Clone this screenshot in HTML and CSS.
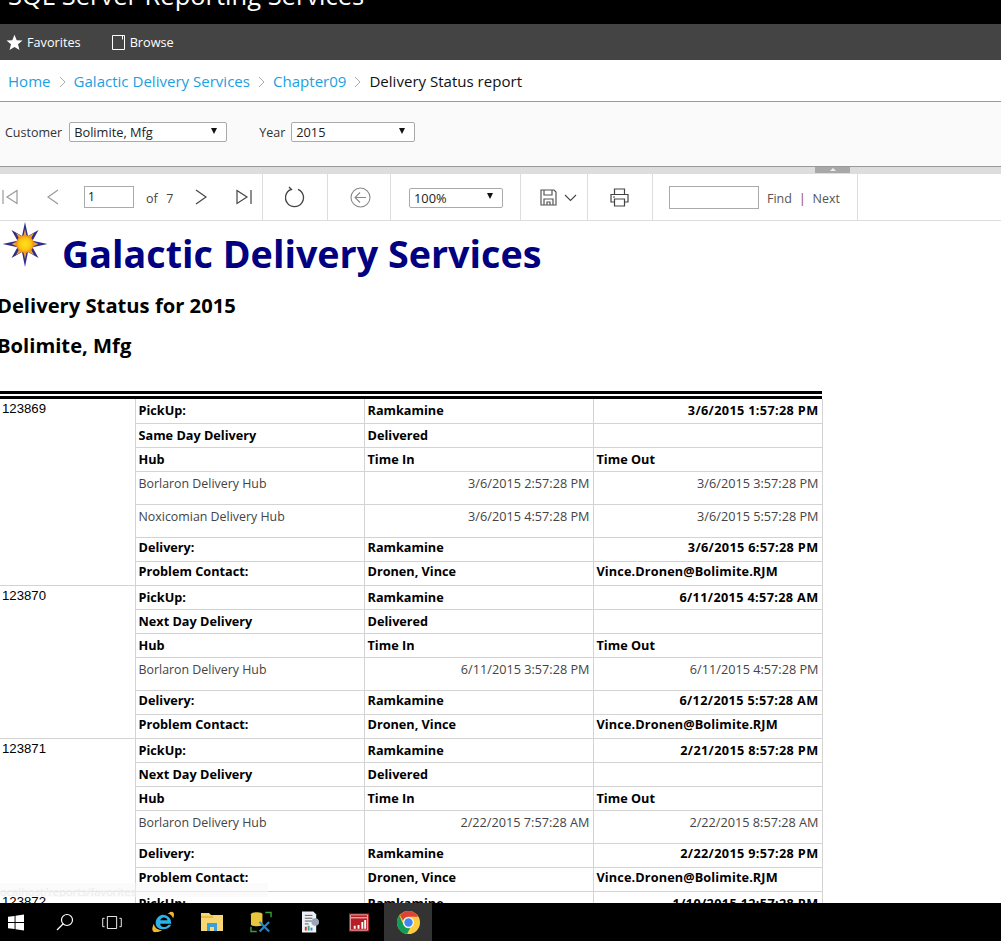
FILE: index.html
```html
<!DOCTYPE html>
<html lang="en">
<head>
<meta charset="utf-8">
<title>Delivery Status report</title>
<link rel="stylesheet" href="styles.css">
</head>
<body>
<div class="page">
  <header class="topbar"><div class="brand">SQL Server Reporting Services</div></header>
  <nav class="navbar">
    <a class="navitem">
      <svg class="navicon" width="17" height="17" viewBox="0 0 17 17"><path fill="#fff" d="M8.500 .8l2.200 5.400 5.800.4-4.500 3.700 1.500 5.700-5-3.100-5 3.100 1.500-5.700L.5 6.600l5.800-.4z"/></svg>
      Favorites</a>
    <a class="navitem browse">
      <svg class="navicon" width="13" height="15" viewBox="0 0 13 15"><path fill="none" stroke="#fff" d="M.5.500h12v14H.5zM10.500 .5v4"/></svg>
      Browse</a>
  </nav>
  <div class="crumbs">
    <a>Home</a><svg class="sep" width="7" height="12" viewBox="0 0 7 12"><path fill="none" stroke="#aaa" d="M1 1l5 5-5 5"/></svg><a>Galactic Delivery Services</a><svg class="sep" width="7" height="12" viewBox="0 0 7 12"><path fill="none" stroke="#aaa" d="M1 1l5 5-5 5"/></svg><a>Chapter09</a><svg class="sep" width="7" height="12" viewBox="0 0 7 12"><path fill="none" stroke="#aaa" d="M1 1l5 5-5 5"/></svg><span class="current">Delivery Status report</span>
  </div>
  <div class="params">
    <span class="plabel">Customer</span>
    <div class="select customer"><span>Bolimite, Mfg</span><i class="caret"></i></div>
    <span class="plabel year">Year</span>
    <div class="select yearsel"><span>2015</span><i class="caret"></i></div>
  </div>
  <div class="splitter"><div class="grip"><i></i></div></div>
  <div class="toolbar">
    <div class="tgroup pager">
      <svg class="first" width="16" height="16" viewBox="0 0 16 16"><path fill="none" stroke="#999" stroke-width="1.200" d="M1 1v14M15 1.500L5 8l10 6.500z"/></svg>
      <svg class="prev" width="12" height="16" viewBox="0 0 12 16"><path fill="none" stroke="#999" stroke-width="1.200" d="M11 1L1 8l10 7"/></svg>
      <div class="pageinput">1</div>
      <span class="of">of&nbsp; 7</span>
      <svg class="next" width="12" height="16" viewBox="0 0 12 16"><path fill="none" stroke="#444" stroke-width="1.200" d="M1 1l10 7-10 7"/></svg>
      <svg class="last" width="16" height="16" viewBox="0 0 16 16"><path fill="none" stroke="#444" stroke-width="1.200" d="M15 1v14M1 1.500L11 8 1 14.500z"/></svg>
    </div>
    <div class="tgroup refresh">
      <svg width="20" height="22" viewBox="0 0 20 22"><path fill="none" stroke="#444" stroke-width="1.300" d="M6 3.400a9 9 0 1 0 7 0M4 1l2.500 2.600L3 5"/></svg>
    </div>
    <div class="tgroup back">
      <svg width="21" height="21" viewBox="0 0 21 21"><circle cx="10.500" cy="10.500" r="9.500" fill="none" stroke="#888" stroke-width="1.100"/><path fill="none" stroke="#888" stroke-width="1.100" d="M16 10.500H5M10 5.500l-5 5 5 5"/></svg>
    </div>
    <div class="tgroup zoom">
      <div class="select zoomsel"><span>100%</span><i class="caret"></i></div>
    </div>
    <div class="tgroup save">
      <svg width="17" height="17" viewBox="0 0 17 17"><path fill="none" stroke="#555" stroke-width="1.200" d="M1 1h13l2 2v13H1zM4 1v5h8V1M4 16v-6h9v6M7 16v-3h3v3"/></svg>
      <svg class="chev" width="13" height="8" viewBox="0 0 13 8"><path fill="none" stroke="#444" stroke-width="1.100" d="M1 1l5.500 5.500L12 1"/></svg>
    </div>
    <div class="tgroup print">
      <svg width="19" height="19" viewBox="0 0 19 19"><path fill="none" stroke="#444" stroke-width="1.200" d="M4.500 6.500V1h10v5.500M4 14H1V6.500h17V14h-3M4.500 11h10v7h-10zM3 9h2"/></svg>
    </div>
    <div class="tgroup find">
      <div class="findinput"></div>
      <span class="findlink">Find</span><span class="pipe">|</span><span class="findlink">Next</span>
    </div>
  </div>
  <main class="report">
    <div class="rhead">
      <svg class="logo" width="46" height="46" viewBox="0 0 46 46">
        <defs><radialGradient id="sun"><stop offset="0" stop-color="#ffe21a"/><stop offset=".65" stop-color="#fdc514"/><stop offset="1" stop-color="#ee8a12"/></radialGradient></defs>
        <path fill="#2f2c8c" d="M23 0l3 14 10.500-6-6 10.800L45.500 22l-15 3.200 6 10.800-10.500-6-3 15-3-15-10.500 6 6-10.800L.500 22l15-3.200-6-10.800 10.500 6z"/>
        <path fill="#f0a030" d="M23 7l1.800 8 7.200-4-4 7.200 8.500 3.800-8.500 3.800 4 7.200-7.200-4L23 37l-1.800-8-7.200 4 4-7.200L9.500 22l8.500-3.800-4-7.200 7.200 4z"/>
        <circle cx="23" cy="22" r="9" fill="url(#sun)"/>
      </svg>
      <h1 class="rtitle">Galactic Delivery Services</h1>
    </div>
    <h2 class="rsub first-sub">Delivery Status for 2015</h2>
    <h2 class="rsub">Bolimite, Mfg</h2>
    <div class="rule"></div>
    <table class="grid">
      <colgroup><col class="c0"><col class="c1"><col class="c1"><col class="c1"></colgroup>
      <tbody>
        <tr class="r24"><td class="id" rowspan="7">123869</td><th>PickUp:</th><th>Ramkamine</th><th class="num">3/6/2015 1:57:28 PM</th></tr>
        <tr class="r24"><th>Same Day Delivery</th><th>Delivered</th><td></td></tr>
        <tr class="r24"><th>Hub</th><th>Time In</th><th>Time Out</th></tr>
        <tr class="r33"><td>Borlaron Delivery Hub</td><td class="num">3/6/2015 2:57:28 PM</td><td class="num">3/6/2015 3:57:28 PM</td></tr>
        <tr class="r33"><td>Noxicomian Delivery Hub</td><td class="num">3/6/2015 4:57:28 PM</td><td class="num">3/6/2015 5:57:28 PM</td></tr>
        <tr class="r24 tight"><th>Delivery:</th><th>Ramkamine</th><th class="num">3/6/2015 6:57:28 PM</th></tr>
        <tr class="r24 tight"><th>Problem Contact:</th><th>Dronen, Vince</th><th class="mail">Vince.Dronen@Bolimite.RJM</th></tr>

        <tr class="r24"><td class="id" rowspan="6">123870</td><th>PickUp:</th><th>Ramkamine</th><th class="num">6/11/2015 4:57:28 AM</th></tr>
        <tr class="r24"><th>Next Day Delivery</th><th>Delivered</th><td></td></tr>
        <tr class="r24"><th>Hub</th><th>Time In</th><th>Time Out</th></tr>
        <tr class="r33"><td>Borlaron Delivery Hub</td><td class="num">6/11/2015 3:57:28 PM</td><td class="num">6/11/2015 4:57:28 PM</td></tr>
        <tr class="r24 tight"><th>Delivery:</th><th>Ramkamine</th><th class="num">6/12/2015 5:57:28 AM</th></tr>
        <tr class="r24 tight"><th>Problem Contact:</th><th>Dronen, Vince</th><th class="mail">Vince.Dronen@Bolimite.RJM</th></tr>

        <tr class="r24"><td class="id" rowspan="6">123871</td><th>PickUp:</th><th>Ramkamine</th><th class="num">2/21/2015 8:57:28 PM</th></tr>
        <tr class="r24"><th>Next Day Delivery</th><th>Delivered</th><td></td></tr>
        <tr class="r24"><th>Hub</th><th>Time In</th><th>Time Out</th></tr>
        <tr class="r33"><td>Borlaron Delivery Hub</td><td class="num">2/22/2015 7:57:28 AM</td><td class="num">2/22/2015 8:57:28 AM</td></tr>
        <tr class="r24 tight"><th>Delivery:</th><th>Ramkamine</th><th class="num">2/22/2015 9:57:28 PM</th></tr>
        <tr class="r24 tight"><th>Problem Contact:</th><th>Dronen, Vince</th><th class="mail">Vince.Dronen@Bolimite.RJM</th></tr>

        <tr class="r24"><td class="id">123872</td><th>PickUp:</th><th>Ramkamine</th><th class="num">1/10/2015 12:57:28 PM</th></tr>
      </tbody>
    </table>
    <div class="statusurl">ocalhost/reports/favorites</div>
  </main>
  <footer class="taskbar">
    <svg class="tb win" width="16" height="17" viewBox="0 0 17 17"><path fill="#fff" d="M0 2.500l7-1v6.500H0zM8 1.300L17 0v8H8zM0 9h7v6.500l-7-1zM8 9h9v8l-9-1.300z"/></svg>
    <svg class="tb search" width="18" height="18" viewBox="0 0 18 18"><path fill="none" stroke="#fff" stroke-width="1.200" d="M7.500 10.500L1 17"/><circle cx="11" cy="7" r="5.500" fill="none" stroke="#fff" stroke-width="1.200"/></svg>
    <svg class="tb taskview" width="20" height="13" viewBox="0 0 21 14"><path fill="none" stroke="#fff" d="M5.500.500h10v13h-10zM2.500 2.500H.500v9h2M18.500 2.500h2v9h-2"/></svg>
    <svg class="tb ie" width="22" height="22" viewBox="0 0 24 24"><path fill="#f2b632" d="M20 1c4-1 5 3 3 7-1-3-3-5-6-5zM2 14c-3 6-2 10 3 9 2 0 4-1 6-2-4 0-8-2-9-7z"/><path fill="#2bb3e8" d="M12 4a9 9 0 0 1 9 10h-12c0 4 6 5 9 1h3c-3 7-17 7-17-2 0-5 4-9 8-9zm-3 6h8c-1-4-7-4-8 0z"/></svg>
    <svg class="tb folder" width="22" height="19" viewBox="0 0 22 19"><path fill="#f7d774" d="M0 0h8l2 2h12v16H0z"/><path fill="#e9b949" d="M0 3h10l2-1v3H0z"/><path fill="#3aa0d8" d="M6 10h10v8h-3v-4H9v4H6z"/></svg>
    <svg class="tb tools" width="22" height="22" viewBox="0 0 23 22"><path fill="none" stroke="#3a9c3a" stroke-width="1.500" d="M16 1h6v5M1 16v5h6"/><path fill="#e8c53a" d="M1 3c0-3 12-3 12 0v11c0 2-12 2-12 0z"/><path stroke="#1e88d0" stroke-width="2.200" d="M10 11l10 10M20 11L10 21"/></svg>
    <svg class="tb doc" width="18" height="22" viewBox="0 0 19 22"><path fill="#eef1f6" d="M0 0h12l3 3v19H0z"/><path stroke="#555" d="M3 4h8M3 7h8M3 10h8M3 13h4"/><circle cx="14" cy="11" r="4" fill="#9aa6b8"/><path fill="#d33" d="M3 16h2v4H3z"/><path fill="#3a7" d="M6 15h2v5H6z"/><path fill="#38c" d="M9 17h2v3H9z"/></svg>
    <svg class="tb chart" width="20" height="19" viewBox="0 0 21 19"><path fill="#b31f24" d="M0 0h21v19H0z"/><path fill="none" stroke="#e8b0b0" d="M1.500 1.500h18v3h-18zM1.500 4.500h18v13h-18z"/><path fill="#fff" d="M5 13h2v3H5zM9 12h2v4H9zM13 9h2v7h-2zM16 7h2v9h-2z"/></svg>
    <div class="tb chromecell">
      <svg width="23" height="23" viewBox="0 0 24 24"><circle cx="12" cy="12" r="12" fill="#ffcd40"/><path fill="#db4437" d="M12 0a12 12 0 0 1 10.400 6H12a6 6 0 0 0-5.700 4L3 4.500A12 12 0 0 1 12 0z"/><path fill="#0f9d58" d="M2.500 4.700l4.600 10.300a6 6 0 0 0 6.600 2.800L10.500 24A12 12 0 0 1 2.500 4.700z"/><circle cx="12" cy="12" r="5.600" fill="#fff"/><circle cx="12" cy="12" r="4.400" fill="#4285f4"/></svg>
    </div>
  </footer>
</div>
</body>
</html>
```
FILE: styles.css
```css
* { box-sizing: border-box; }
html, body { margin: 0; padding: 0; background: #fff; }
body { font-family: "Open Sans", "Noto Sans", sans-serif; color: #000; }
.page { width: 1001px; height: 941px; display: flex; flex-direction: column; overflow: hidden; }

.topbar { height: 24px; flex: none; background: #000; overflow: hidden; }
.brand { color: #fff; font-size: 25.500px; line-height: 30px; margin-top: -20px; padding-left: 8px; font-weight: 400; white-space: nowrap; }

.navbar { height: 36px; flex: none; background: #444; color: #fff; display: flex; align-items: center; font-size: 12.700px; padding-left: 6px; }
.navitem { display: flex; align-items: center; }
.navicon { margin-right: 4px; }
.browse { margin-left: 31px; }
.browse .navicon { margin-right: 5px; }

.crumbs { height: 41px; flex: none; margin-top: 1px; border-bottom: 1px solid #999; padding-left: 8px; display: flex; align-items: center; font-size: 15.050px; background: #fff; }
.crumbs a { color: #1ba1e2; }
.sep { margin: 1px 8px 0; flex: none; }
.current { color: #111; }

.params { height: 65px; flex: none; background: #fafafa; border-bottom: 1px solid #999; display: flex; align-items: center; padding: 0 0 4px 5px; font-size: 12.500px; color: #333; }
.plabel { margin-right: 7px; }
.plabel.year { margin-left: 32px; margin-right: 6px; }
.select { height: 20px; border: 1px solid #aaa; border-radius: 2px; background: #fff; display: flex; align-items: center; justify-content: space-between; padding: 0 9px 0 4px; font-size: 12.800px; color: #222; }
.customer { width: 158px; }
.yearsel { width: 124px; }
.zoomsel { width: 94px; margin-top: 1px; }
.caret { width: 0; height: 0; border-left: 3.500px solid transparent; border-right: 3.500px solid transparent; border-top: 6px solid #111; margin-top: -3px; }

.splitter { height: 7px; flex: none; background: #ddd; position: relative; }
.grip { position: absolute; left: 815px; top: 0; width: 35px; height: 6px; background: #a8a8a8; display: flex; justify-content: center; }
.grip i { width: 0; height: 0; border-left: 3px solid transparent; border-right: 3px solid transparent; border-bottom: 3px solid #eee; margin-top: 1px; }

.toolbar { height: 47px; flex: none; border-bottom: 1px solid #ddd; display: flex; font-size: 12.500px; color: #444; }
.tgroup { border-right: 1px solid #ddd; display: flex; align-items: center; }
.pager { width: 263px; padding-left: 2px; }
.prev { margin-left: 29px; }
.pageinput { width: 50px; height: 22px; border: 1px solid #aaa; margin-left: 25px; padding-left: 3px; line-height: 20px; color: #111; font-size: 12px; }
.of { margin: 2px 0 0 12px; word-spacing: 1px; }
.next { margin-left: 22px; }
.last { margin-left: 29px; }
.refresh { width: 65px; justify-content: center; }
.back { width: 63px; justify-content: center; padding-left: 2px; }
.zoom { width: 130px; padding-left: 18px; }
.save { width: 67px; justify-content: center; padding-left: 8px; }
.chev { margin-left: 7px; margin-top: 2px; }
.print { width: 65px; justify-content: center; padding-right: 2px; }
.find { width: 205px; padding-left: 16px; }
.findinput { width: 90px; height: 23px; border: 1px solid #aaa; margin-right: 8px; }
.findlink { font-size: 12.500px; color: #555; margin-top: 2px; }
.pipe { margin: 2px 7px 0; color: #933; font-size: 12px; }

.report { flex: 1; min-height: 0; overflow: hidden; position: relative; }
.rhead { display: flex; align-items: flex-start; padding: 1px 0 0 2px; height: 71px; }
.logo { flex: none; }
.rtitle { margin: 7px 0 0 14px; color: #000080; font-size: 37.700px; line-height: 50px; font-weight: 700; white-space: nowrap; }
.rsub { margin: 0 0 0 -3px; font-size: 20.200px; line-height: 28px; font-weight: 700; color: #000; white-space: nowrap; }
.first-sub { margin-top: -1px; }
.rsub + .rsub { margin-top: 12px; }
.rule { width: 822px; height: 8px; margin-top: 32px; border-top: 3px solid #000; border-bottom: 3px solid #000; }

.grid { border-collapse: collapse; table-layout: fixed; width: 822px; }
.c0 { width: 135px; }
.c1 { width: 229px; }
.grid th, .grid td { border: 1px solid #d3d3d3; padding: 3px 3px 0 3px; text-align: left; vertical-align: top; font-size: 12.700px; line-height: 17px; white-space: nowrap; overflow: hidden; }
.grid tr:first-child > * { border-top: 0; }
.grid th { font-weight: 700; color: #000; }
.grid th.num { letter-spacing: .35px; }
.grid th.mail { letter-spacing: .12px; }
.grid td { color: #444; font-weight: 400; }
.grid td:not(.num):not(.id) { font-size: 12.400px; }
.grid .num { text-align: right; }
.grid .tight > th { padding-top: 1px; }
.grid .id { border-left: 0; font-family: "Liberation Sans", sans-serif; font-size: 13.200px; padding: 1px 0 0 2px; color: #000; }
.r24 { height: 24px; }
.r33 { height: 33px; }

.statusurl { position: absolute; left: 0; bottom: 6px; width: 268px; height: 14px; background: rgba(248,248,248,.55); color: #ececec; font-size: 11.200px; line-height: 17px; white-space: nowrap; overflow: hidden; }

.taskbar { height: 38px; flex: none; background: #000; display: flex; align-items: center; padding-left: 8px; }
.tb { flex: none; }
.search { margin-left: 32px; }
.taskview { margin-left: 28px; }
.ie { margin-left: 30px; }
.folder { margin-left: 27px; }
.tools { margin-left: 27px; }
.doc { margin-left: 30px; }
.chart { margin-left: 29px; }
.chromecell { margin-left: 15px; width: 48px; height: 38px; background: #333; display: flex; align-items: center; justify-content: center; }
```
